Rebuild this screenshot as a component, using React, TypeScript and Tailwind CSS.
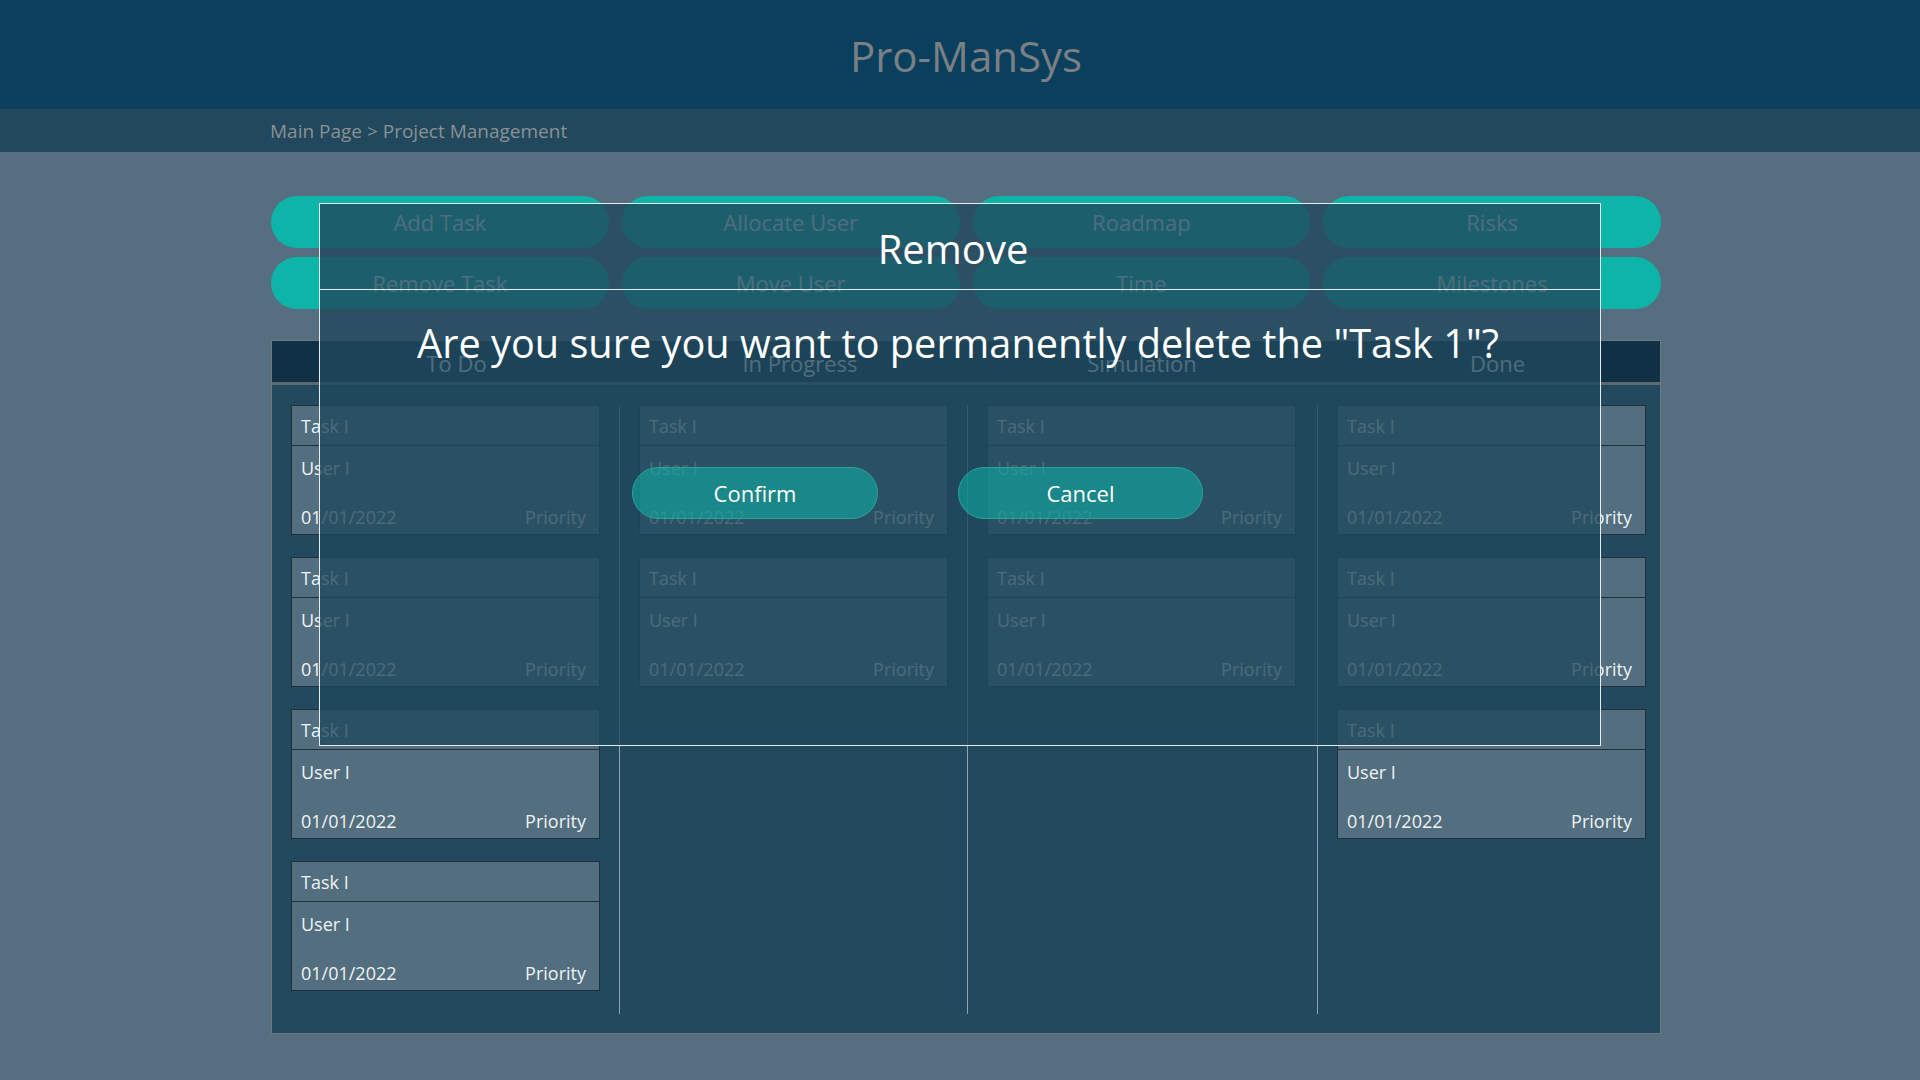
import React from "react";

const font = { fontFamily: '"Open Sans", "Noto Sans", sans-serif' };

function Card() {
  return (
    <div className="w-[309px] h-[130px] border border-[#1f303c] bg-[#536e7e] text-[#eef3f5] text-[18px] flex flex-col">
      <div className="h-[40px] border-b-[1.5px] border-[#1f303c] flex items-center pl-[9px] pt-[2px]">Task I</div>
      <div className="flex-1 flex flex-col justify-between pl-[9px] pr-[13px] pt-[10px] pb-[5px]">
        <div className="leading-[24px]">User I</div>
        <div className="flex justify-between leading-[24px]">
          <span>01/01/2022</span>
          <span>Priority</span>
        </div>
      </div>
    </div>
  );
}

function Column({ count, first, width }: { count: number; first?: boolean; width: string }) {
  return (
    <div className={`${width} h-[609px] pl-[19px] flex flex-col gap-[22px] ${first ? "" : "border-l border-[#8ea6b4]"}`}>
      {Array.from({ length: count }).map((_, i) => (
        <Card key={i} />
      ))}
    </div>
  );
}

export default function App() {
  const buttons = ["Add Task", "Allocate User", "Roadmap", "Risks", "Remove Task", "Move User", "Time", "Milestones"];
  return (
    <div style={font} className="relative w-[1920px] h-[1080px] bg-[#556f80] overflow-hidden">
      <header className="h-[109px] bg-[#0a3f5d] flex items-center justify-center">
        <h1 className="text-[42px] text-[#7a8083] pl-[12px] pt-[2px]">Pro-ManSys</h1>
      </header>
      <div className="h-[43px] bg-[#21485c] flex items-center pl-[270px] pt-[2px] text-[19px] text-[#8a9195]">
        Main Page &gt; Project Management
      </div>

      <div className="ml-[271px] w-[1390px] pt-[44px]">
        <div className="grid grid-cols-4 gap-x-[13px] gap-y-[9px]">
          {buttons.map((b) => (
            <button key={b} className="h-[52px] rounded-full bg-[#0cb5a8] text-white text-[22px]">
              {b}
            </button>
          ))}
        </div>

        <div className="mt-[31px] h-[694px] border border-[#6a7880] bg-[#22495d]">
          <div className="h-[44px] bg-[#0f3045] border-b-[3px] border-[#5b6a73] grid grid-cols-[347px_348px_350px_1fr] text-[22px] text-white items-center text-center pt-[4px]">
            <div className="pl-[22px]">To Do</div>
            <div className="pl-[14px]">In Progress</div>
            <div>Simulation</div>
            <div className="pl-[18px]">Done</div>
          </div>
          <div className="flex pt-[20px]">
            <Column count={4} first width="w-[347px]" />
            <Column count={2} width="w-[348px]" />
            <Column count={2} width="w-[350px]" />
            <Column count={3} width="flex-1" />
          </div>
        </div>
      </div>

      {/* Modal */}
      <div className="absolute left-[319px] top-[203px] w-[1282px] h-[543px] border-[1.5px] border-[#e4ecef] bg-[#21485c]/80 flex flex-col">
        <div className="h-[86px] border-b-[1.5px] border-[#e4ecef] flex items-center justify-center text-white text-[40px] pt-[4px] pr-[14px]">
          Remove
        </div>
        <div className="mt-[28px] text-center text-white text-[39.7px] leading-[50px] pr-[4px]">
          Are you sure you want to permanently delete the "Task 1"?
        </div>
        <div className="mt-[99px] flex pl-[312px] gap-[80px]">
          <button className="w-[246px] h-[52px] rounded-full bg-[#0cb5a8]/55 border border-[#2aa39c] text-white text-[22px]">
            Confirm
          </button>
          <button className="w-[245px] h-[52px] rounded-full bg-[#0cb5a8]/55 border border-[#2aa39c] text-white text-[22px]">
            Cancel
          </button>
        </div>
      </div>
    </div>
  );
}
